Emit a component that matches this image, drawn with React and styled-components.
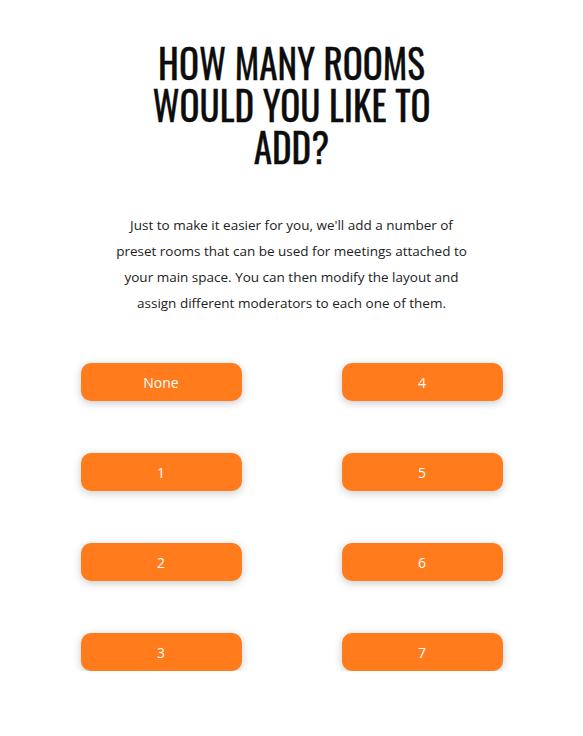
import React from 'react'
import styled, { createGlobalStyle } from 'styled-components'

const GlobalStyle = createGlobalStyle`
  body {
    margin: 0;
    background: #fff;
    font-family: "Open Sans", "Liberation Sans", sans-serif;
  }
`;

const Page = styled.div`
  display: flex;
  flex-direction: column;
  align-items: center;
  padding-top: 41px;
`;

const Title = styled.h1`
  margin: 0;
  font-family: "Oswald", "Liberation Sans Narrow", "DejaVu Sans Condensed", sans-serif;
  font-weight: 400;
  font-size: 40px;
  line-height: 42px;
  text-align: center;
  color: #0d0d0d;
  transform: scaleX(0.93);
  white-space: nowrap;
  -webkit-text-stroke: 0.3px #0d0d0d;
`;

const Intro = styled.p`
  margin: 45px 0 0;
  width: 360px;
  font-size: 13.5px;
  line-height: 26px;
  text-align: center;
  color: #222;
`;

const Options = styled.div`
  display: grid;
  grid-template-columns: 161px 161px;
  column-gap: 100px;
  row-gap: 52px;
  margin-top: 47px;
`;

const Option = styled.button`
  height: 38px;
  border: none;
  border-radius: 10px;
  background: #ff7b1c;
  color: #fff;
  font-family: "Open Sans", "Liberation Sans", sans-serif;
  font-size: 14px;
  box-shadow: 0 2px 8px rgba(0, 0, 0, 0.22);
  cursor: pointer;
`;

const choices = ['None', '4', '1', '5', '2', '6', '3', '7'];

const App = () => {
  return (
    <Page>
      <GlobalStyle />
      <Title>
        HOW MANY ROOMS<br />WOULD YOU LIKE TO<br />ADD?
      </Title>
      <Intro>
        Just to make it easier for you, we'll add a number of preset rooms that can be used for meetings attached to your main space. You can then modify the layout and assign different moderators to each one of them.
      </Intro>
      <Options>
        {choices.map((c) => (
          <Option key={c}>{c}</Option>
        ))}
      </Options>
    </Page>
  )
}

export default App
